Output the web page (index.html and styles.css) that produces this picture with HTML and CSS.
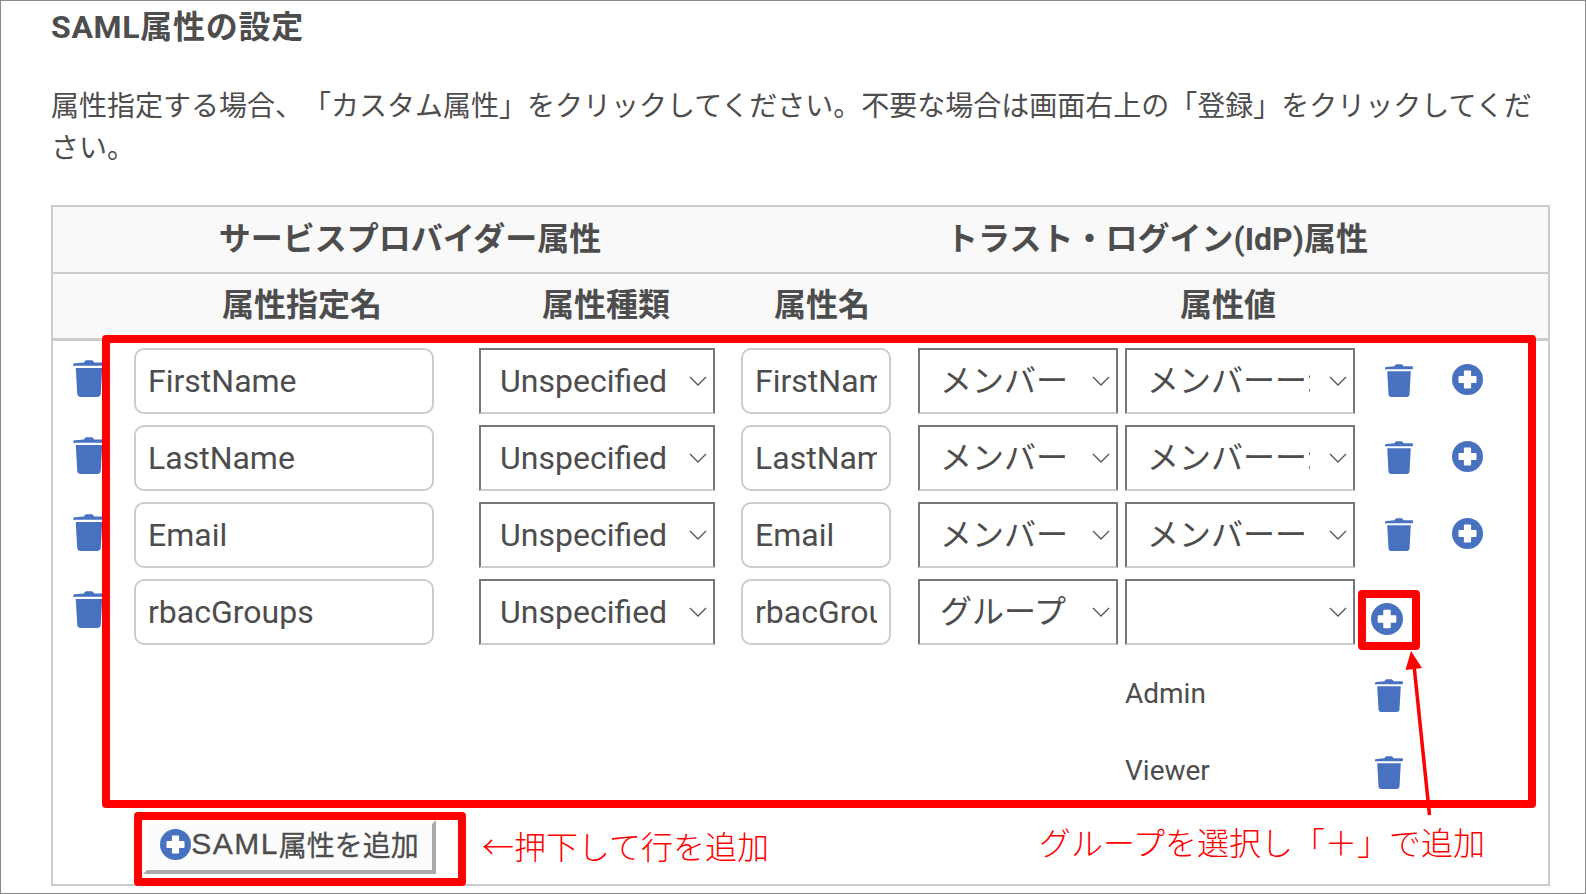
FILE: index.html
```html
<!DOCTYPE html>
<html lang="ja">
<head>
    <meta charset="UTF-8">
    <meta name="viewport" content="width=device-width, initial-scale=1.0">
    <title>SAML属性の設定</title>
    <link rel="stylesheet" href="styles.css">
</head>
<body>
    <svg class="sprite" width="0" height="0">
        <symbol id="trash" viewBox="0 0 28 33">
            <path d="M9.5 2.2C10 .8 11 .3 12.500 .3h3c1.500 0 2.500 .5 3 1.900h8c1 0 1.500 .5 1.500 1.300v.4c0 .8-.5 1.300-1.500 1.300H1.500C.5 5.900 0 5.400 0 4.600v-.4c0-.8 .5-1.300 1.500-1.300z"/>
            <path d="M2.200 7.200h23.600l-1.300 23c-.1 1.700-1 2.700-2.700 2.700H6.200c-1.700 0-2.600-1-2.700-2.700z"/>
        </symbol>
        <symbol id="plus" viewBox="0 0 31 31">
            <circle cx="15.500" cy="15.500" r="15.500"/>
            <path class="plus-bar" d="M12.700 6.500h5.600c.5 0 .8 .3 .8 .8v4.600h4.600c.5 0 .8 .3 .8 .8v5.600c0 .5-.3 .8-.8 .8h-4.600v4.600c0 .5-.3 .8-.8 .8h-5.600c-.5 0-.8-.3-.8-.8v-4.600H7.300c-.5 0-.8-.3-.8-.8v-5.600c0-.5 .3-.8 .8-.8h4.600V7.300c0-.5 .3-.8 .8-.8z"/>
        </symbol>
    </svg>

    <div class="frame">
        <h2>SAML属性の設定</h2>
        <p class="lead">属性指定する場合、「カスタム属性」をクリックしてください。不要な場合は画面右上の「登録」をクリックしてください。</p>

        <div class="attr-table">
            <div class="head head-top">
                <div class="th-sp">サービスプロバイダー属性</div>
                <div class="th-idp">トラスト・ログイン(IdP)属性</div>
            </div>
            <div class="head head-sub">
                <div class="th-name">属性指定名</div>
                <div class="th-type">属性種類</div>
                <div class="th-attr">属性名</div>
                <div class="th-value">属性値</div>
            </div>

            <div class="rows">
                <div class="row">
                    <svg class="icon trash-big"><use href="#trash"/></svg>
                    <input class="f-name" type="text" value="FirstName">
                    <select class="f-type"><option>Unspecified</option></select>
                    <input class="f-attr" type="text" value="FirstName">
                    <select class="f-src"><option>メンバー</option></select>
                    <select class="f-val"><option>メンバーー:姓</option></select>
                    <svg class="icon trash-row"><use href="#trash"/></svg>
                    <svg class="icon plus-row"><use href="#plus"/></svg>
                </div>
                <div class="row">
                    <svg class="icon trash-big"><use href="#trash"/></svg>
                    <input class="f-name" type="text" value="LastName">
                    <select class="f-type"><option>Unspecified</option></select>
                    <input class="f-attr" type="text" value="LastName">
                    <select class="f-src"><option>メンバー</option></select>
                    <select class="f-val"><option>メンバーー:名</option></select>
                    <svg class="icon trash-row"><use href="#trash"/></svg>
                    <svg class="icon plus-row"><use href="#plus"/></svg>
                </div>
                <div class="row">
                    <svg class="icon trash-big"><use href="#trash"/></svg>
                    <input class="f-name" type="text" value="Email">
                    <select class="f-type"><option>Unspecified</option></select>
                    <input class="f-attr" type="text" value="Email">
                    <select class="f-src"><option>メンバー</option></select>
                    <select class="f-val"><option>メンバーー</option></select>
                    <svg class="icon trash-row"><use href="#trash"/></svg>
                    <svg class="icon plus-row"><use href="#plus"/></svg>
                </div>
                <div class="row">
                    <svg class="icon trash-big"><use href="#trash"/></svg>
                    <input class="f-name" type="text" value="rbacGroups">
                    <select class="f-type"><option>Unspecified</option></select>
                    <input class="f-attr" type="text" value="rbacGroups">
                    <select class="f-src"><option>グループ</option></select>
                    <select class="f-val"><option></option></select>
                    <svg class="icon plus-group"><use href="#plus"/></svg>
                </div>
                <div class="sub-row">
                    <span class="group-name">Admin</span>
                    <svg class="icon trash-row"><use href="#trash"/></svg>
                </div>
                <div class="sub-row">
                    <span class="group-name">Viewer</span>
                    <svg class="icon trash-row"><use href="#trash"/></svg>
                </div>
            </div>

            <button class="add-btn" type="button"><svg class="icon plus-btn"><use href="#plus"/></svg><span class="btn-latin">SAML</span>属性を追加</button>
        </div>

        <!-- annotations drawn over the screenshot -->
        <div class="mark mark-rows"></div>
        <div class="mark mark-plus"></div>
        <div class="mark mark-btn"></div>
        <svg class="arrow" width="60" height="180" viewBox="0 0 60 180">
            <path d="M38.500 164L23 14" fill="none" stroke="#f00" stroke-width="3.500"/>
            <path d="M20 0L14.500 19 31 17z" fill="#f00"/>
        </svg>
        <div class="note note-btn">←押下して行を追加</div>
        <div class="note note-plus">グループを選択し「＋」で追加</div>
    </div>
</body>
</html>
```

FILE: styles.css
```css
* {
    box-sizing: border-box;
}
body {
    margin: 0;
    font-family: Roboto, "Noto Sans CJK JP", sans-serif;
    color: #4d4d4d;
    background-color: #fff;
}
.sprite {
    position: absolute;
}
.plus-bar {
    fill: #fff;
}
.frame {
    position: relative;
    height: 894px;
    padding: 1px 34px 0 50px;
    border: 1px solid #888;
    overflow: hidden;
}
h2 {
    margin: 0;
    font-size: 32px;
    line-height: 50px;
    font-weight: 700;
    letter-spacing: 0.700px;
}
.lead {
    margin: 34px 0 0;
    font-size: 28px;
    line-height: 42px;
    text-spacing-trim: space-all;
}
.attr-table {
    width: 1499px;
    height: 681px;
    margin-top: 35px;
    border: 2px solid #ccc;
}

/* header rows */
.head {
    display: flex;
    background-color: #f9f9f9;
    font-size: 32px;
    font-weight: 700;
    text-align: center;
}
.head-top {
    height: 67px;
    padding-top: 6px;
    line-height: 52px;
    border-bottom: 2px solid #ccc;
}
.head-sub {
    height: 67px;
    padding-top: 5px;
    line-height: 52px;
    border-bottom: 3px solid #ccc;
}
.th-sp {
    width: 714px;
}
.th-idp {
    width: 776px;
    margin-left: 2px;
}
.th-name {
    width: 334px;
    margin-left: 82px;
}
.th-type {
    width: 274px;
}
.th-attr {
    width: 158px;
}
.th-value {
    width: 640px;
    margin-left: 7px;
}

/* attribute rows */
.rows {
    padding: 7px 0 0 20px;
}
.row {
    display: flex;
    height: 66px;
    margin-bottom: 11px;
}
input, select {
    height: 66px;
    font-family: inherit;
    font-size: 32px;
    color: #4d4d4d;
    background-color: #fff;
}
input {
    padding: 0 12px;
    border: 2px solid #ccc;
    border-radius: 10px;
}
select {
    appearance: none;
    padding: 0 40px 0 20px;
    border: 2px solid #767676;
    border-bottom-color: #ccc;
    border-radius: 0;
    background-image: url("data:image/svg+xml,%3Csvg xmlns='http://www.w3.org/2000/svg' width='18' height='10'%3E%3Cpath d='M1 1l8 8 8-8' fill='none' stroke='%23555' stroke-width='1.300'/%3E%3C/svg%3E");
    background-repeat: no-repeat;
    background-position: right 6px center;
}
.f-name {
    width: 300px;
    margin-right: 45px;
}
.f-type {
    width: 236px;
    margin-right: 26px;
    padding-left: 19px;
}
.f-attr {
    width: 150px;
    margin-right: 27px;
}
.f-src {
    width: 200px;
    margin-right: 7px;
}
.f-val {
    width: 230px;
    padding-right: 43px;
}
.icon {
    flex: none;
    fill: #4871c0;
}
.trash-big {
    width: 32px;
    height: 37px;
    margin: 12px 29px 0 0;
}
.trash-row {
    width: 28px;
    height: 33px;
    margin: 16px 0 0 30px;
}
.plus-row {
    width: 31px;
    height: 31px;
    margin: 16px 0 0 39px;
}
.plus-group {
    width: 32px;
    height: 32px;
    margin: 24px 0 0 16px;
}

/* groups added under the last row */
.sub-row {
    display: flex;
    align-items: center;
    height: 65px;
    margin: 0 0 12px 1052px;
    padding-top: 10px;
    font-size: 28px;
}
.group-name {
    width: 250px;
}
.sub-row .trash-row {
    margin: 4px 0 0 0;
}

.add-btn {
    display: flex;
    align-items: center;
    justify-content: center;
    width: 293px;
    height: 54px;
    margin: 22px 0 0 90px;
    padding: 0 0 6px;
    font-family: "Liberation Sans", "Noto Sans CJK JP", sans-serif;
    font-size: 28px;
    color: #4d4d4d;
    background-color: #fcfcfc;
    border: 4px solid;
    border-color: #fff #aaa #aaa #fff;
    -webkit-text-stroke: 0.300px #4d4d4d;
}
.btn-latin {
    font-size: 30px;
    letter-spacing: 1.500px;
}
.plus-btn {
    width: 31px;
    height: 31px;
}

/* red annotations */
.mark {
    position: absolute;
    border: 8px solid #f00;
    border-radius: 4px;
}
.mark-rows {
    left: 101px;
    top: 334px;
    width: 1434px;
    height: 473px;
}
.mark-plus {
    left: 1357px;
    top: 589px;
    width: 62px;
    height: 60px;
}
.mark-btn {
    left: 133px;
    top: 811px;
    width: 332px;
    height: 74px;
}
.arrow {
    position: absolute;
    left: 1390px;
    top: 650px;
}
.note {
    position: absolute;
    font-size: 32px;
    line-height: 48px;
    font-weight: 300;
    color: #f00;
    white-space: nowrap;
}
.note-btn {
    left: 481px;
    top: 823px;
}
.note-plus {
    left: 1038px;
    top: 819px;
}
```
